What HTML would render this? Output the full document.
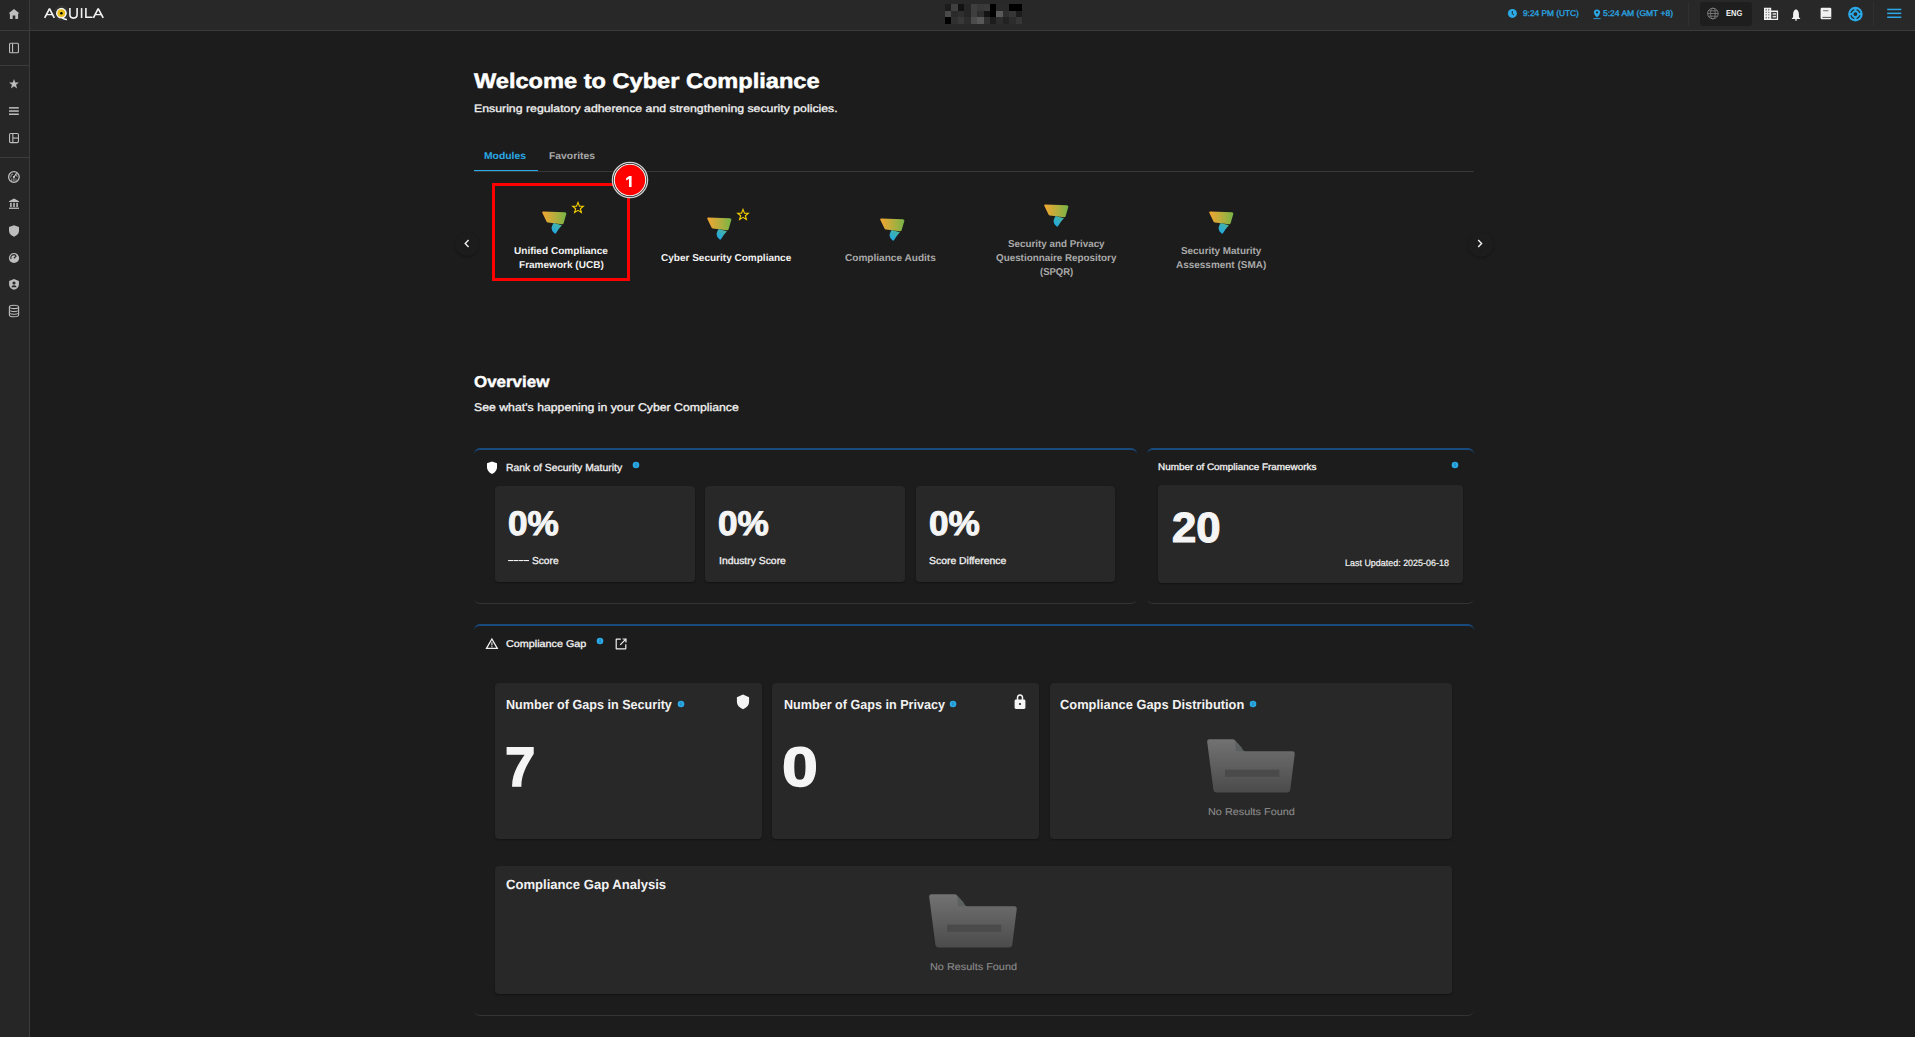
<!DOCTYPE html>
<html><head><meta charset="utf-8"><style>
html,body{margin:0;padding:0;width:1915px;height:1037px;overflow:hidden;background:#1c1c1c;font-family:"Liberation Sans",sans-serif;}
.a{position:absolute;}
.t{position:absolute;white-space:nowrap;transform-origin:0 0;font-family:"Liberation Sans",sans-serif;text-rendering:geometricPrecision;}
#topbar{position:absolute;left:0;top:0;width:1915px;height:30px;background:#282828;border-bottom:1px solid #3b3b3b;}
#side{position:absolute;left:0;top:31px;width:29px;height:1006px;background:#262626;border-right:1px solid #3b3b3b;}
.sep{position:absolute;left:0;width:29px;height:1px;background:#3b3b3b;}
.card{position:absolute;box-sizing:border-box;border-radius:6px;border-top:2px solid #184a7c;border-bottom:1px solid #333;background:#1c1c1c;}
.tile{position:absolute;background:#282828;border-radius:4px;box-shadow:0 1px 2px rgba(0,0,0,0.35);}
.dot{position:absolute;width:6px;height:6px;border-radius:50%;background:#2aa9e6;}

</style></head><body>
<div id="topbar"></div>
<div id="side"></div>
<div class="a" style="left:0;top:0;width:29px;height:30px;background:#262626;border-right:1px solid #3b3b3b"></div>
<div class="sep" style="top:65px"></div>
<div class="sep" style="top:157px"></div>
<!-- sidebar icons -->
<svg class="a" style="left:8px;top:8px" width="12" height="12" viewBox="0 0 12 12"><path d="M6 0.9 L1 5.1 Q0.7 5.4 1.1 5.6 L1.9 5.6 V10.6 Q1.9 11 2.3 11 H4.7 V7.6 H7.3 V11 H9.7 Q10.1 11 10.1 10.6 V5.6 L10.9 5.6 Q11.3 5.4 11 5.1 Z" fill="#bdbdbd"/></svg>
<svg class="a" style="left:8px;top:42px" width="12" height="12" viewBox="0 0 12 12"><rect x="1.55" y="1.25" width="8.9" height="9.5" rx="1" fill="none" stroke="#bdbdbd" stroke-width="1.1"/><rect x="4" y="1.5" width="1.1" height="9" fill="#bdbdbd"/></svg>
<svg class="a" style="left:8px;top:78px" width="12" height="12" viewBox="0 0 12 12"><path d="M6 1 L7.25 4.4 L10.9 4.6 L8.05 6.85 L9.05 10.4 L6 8.35 L2.95 10.4 L3.95 6.85 L1.1 4.6 L4.75 4.4 Z" fill="#bdbdbd"/></svg>
<svg class="a" style="left:8px;top:105px" width="12" height="12" viewBox="0 0 12 12"><rect x="1" y="2.1" width="9.8" height="1.5" fill="#bdbdbd"/><rect x="1" y="5.3" width="9.8" height="1.5" fill="#bdbdbd"/><rect x="1" y="8.5" width="9.8" height="1.5" fill="#bdbdbd"/></svg>
<svg class="a" style="left:8px;top:132px" width="12" height="12" viewBox="0 0 12 12"><rect x="1.55" y="1.45" width="8.9" height="9.2" rx="1.3" fill="none" stroke="#bdbdbd" stroke-width="1.1"/><rect x="4.3" y="1.5" width="1.1" height="9" fill="#bdbdbd"/><rect x="5" y="5.5" width="5" height="1.1" fill="#bdbdbd"/></svg>
<svg class="a" style="left:7px;top:170px" width="14" height="14" viewBox="0 0 14 14"><circle cx="6.9" cy="7" r="5.3" fill="none" stroke="#bdbdbd" stroke-width="1.3"/><path d="M3.7 7.6 A3.3 3.3 0 0 1 6 3.9 M8.2 4.2 A3.3 3.3 0 0 1 10.2 6.8" fill="none" stroke="#a8a8a8" stroke-width="1"/><path d="M6.9 7 L9.6 3.4" stroke="#c8c8c8" stroke-width="1.2"/><circle cx="6.9" cy="7" r="1.1" fill="#d0d0d0"/><path d="M6.9 8 V11.6" stroke="#8a8a8a" stroke-width="1.2"/><path d="M4.8 8.5 V11 M9 8.5 V11" stroke="#9a9a9a" stroke-width="0.9"/></svg>
<svg class="a" style="left:8px;top:197px" width="12" height="13" viewBox="0 0 12 13"><path d="M6 1.5 L11 4.2 V5 H1 V4.2 Z" fill="#bdbdbd"/><rect x="2.1" y="5.8" width="1.6" height="4.2" fill="#bdbdbd"/><rect x="5.2" y="5.8" width="1.6" height="4.2" fill="#bdbdbd"/><rect x="8.3" y="5.8" width="1.6" height="4.2" fill="#bdbdbd"/><rect x="1" y="10.6" width="10" height="1.3" fill="#bdbdbd"/></svg>
<svg class="a" style="left:8px;top:224px" width="12" height="14" viewBox="0 0 12 14"><path d="M6 1.2 L11 3.1 V6.8 Q11 10.6 6 12.7 Q1 10.6 1 6.8 V3.1 Z" fill="#bdbdbd"/></svg>
<svg class="a" style="left:8px;top:252px" width="12" height="12" viewBox="0 0 12 12"><circle cx="6" cy="6" r="5.1" fill="#bdbdbd"/><path d="M3.2 7 A2.9 2.9 0 0 1 8 3.8" fill="none" stroke="#262626" stroke-width="1.1"/><path d="M5.9 6.2 L8.4 3.9" stroke="#262626" stroke-width="1.2"/></svg>
<svg class="a" style="left:8px;top:278px" width="12" height="13" viewBox="0 0 12 13"><path d="M6 0.9 L10.9 2.9 V6.4 Q10.9 10 6 11.8 Q1.1 10 1.1 6.4 V2.9 Z" fill="#bdbdbd"/><circle cx="6" cy="5" r="1.55" fill="#262626"/><path d="M3.4 9.2 Q3.6 7.2 6 7.2 Q8.4 7.2 8.6 9.2 Z" fill="#262626"/></svg>
<svg class="a" style="left:8px;top:304px" width="12" height="14" viewBox="0 0 12 14"><ellipse cx="6" cy="2.9" rx="4.6" ry="1.7" fill="none" stroke="#bdbdbd" stroke-width="1.1"/><path d="M1.4 2.9 V11 Q1.4 12.8 6 12.8 Q10.6 12.8 10.6 11 V2.9" fill="none" stroke="#bdbdbd" stroke-width="1.1"/><path d="M1.4 6 Q1.4 7.6 6 7.6 Q10.6 7.6 10.6 6 M1.4 8.7 Q1.4 10.3 6 10.3 Q10.6 10.3 10.6 8.7" fill="none" stroke="#bdbdbd" stroke-width="1"/></svg>

<!-- logo -->
<svg class="a" style="left:40px;top:4px" width="70" height="20" viewBox="40 4 70 20">
 <path d="M44.7 17.9 L49.5 8.6 L54.3 17.9" fill="none" stroke="#f2f2f2" stroke-width="1.65" stroke-linejoin="bevel"/><path d="M46.8 14.6 H52.2" stroke="#f2f2f2" stroke-width="1.3"/>
 <circle cx="61.4" cy="13.3" r="6.9" fill="none" stroke="#3c3c3c" stroke-width="0.9"/>
 <circle cx="61.4" cy="13.2" r="5.4" fill="#f2f2f2"/>
 <circle cx="61.3" cy="13.1" r="3.9" fill="#e6bf1d"/>
 <circle cx="61.4" cy="13.2" r="1.25" fill="#000"/>
 <path d="M62.3 17.9 Q64.6 19.7 67 19.4" fill="none" stroke="#f2f2f2" stroke-width="1.5"/>
 <path d="M69.9 8.1 V14.6 Q69.9 18.1 73.5 18.1 Q77.1 18.1 77.1 14.6 V8.1" fill="none" stroke="#f2f2f2" stroke-width="1.6"/>
 <rect x="80.8" y="8.1" width="1.6" height="9.9" fill="#f2f2f2"/>
 <path d="M85.9 8.1 V17.2 H92.5" fill="none" stroke="#f2f2f2" stroke-width="1.6"/>
 <path d="M93.4 17.9 L98.2 8.6 L103.2 17.9" fill="none" stroke="#f2f2f2" stroke-width="1.65" stroke-linejoin="bevel"/><path d="M95.5 14.6 H101" stroke="#f2f2f2" stroke-width="1.3"/>
</svg>
<svg class="a" style="left:945px;top:4px" width="77" height="20" viewBox="945 4 77 20" shape-rendering="crispEdges"><rect x="945" y="4" width="6" height="7" fill="#1c1c1c"/><rect x="951" y="4" width="7" height="7" fill="#404040"/><rect x="958" y="4" width="6" height="7" fill="#121212"/><rect x="964" y="4" width="7" height="7" fill="#262626"/><rect x="971" y="4" width="6" height="7" fill="#3e3e3e"/><rect x="977" y="4" width="7" height="7" fill="#383838"/><rect x="984" y="4" width="6" height="7" fill="#3a3a3a"/><rect x="990" y="4" width="6" height="7" fill="#000000"/><rect x="996" y="4" width="7" height="7" fill="#292929"/><rect x="1003" y="4" width="6" height="7" fill="#292929"/><rect x="1009" y="4" width="7" height="7" fill="#000000"/><rect x="1016" y="4" width="6" height="7" fill="#000000"/><rect x="945" y="11" width="6" height="6" fill="#4a4a4a"/><rect x="951" y="11" width="7" height="6" fill="#2a2a2a"/><rect x="958" y="11" width="6" height="6" fill="#2e2e2e"/><rect x="964" y="11" width="7" height="6" fill="#262626"/><rect x="971" y="11" width="6" height="6" fill="#3e3e3e"/><rect x="977" y="11" width="7" height="6" fill="#2e2e2e"/><rect x="984" y="11" width="6" height="6" fill="#131313"/><rect x="990" y="11" width="6" height="6" fill="#000000"/><rect x="996" y="11" width="7" height="6" fill="#5a5a5a"/><rect x="1003" y="11" width="6" height="6" fill="#2e2e2e"/><rect x="1009" y="11" width="7" height="6" fill="#363636"/><rect x="1016" y="11" width="6" height="6" fill="#1c1c1c"/><rect x="945" y="17" width="6" height="7" fill="#000000"/><rect x="951" y="17" width="7" height="7" fill="#303030"/><rect x="958" y="17" width="6" height="7" fill="#383838"/><rect x="964" y="17" width="7" height="7" fill="#2c2c2c"/><rect x="971" y="17" width="6" height="7" fill="#4c4c4c"/><rect x="977" y="17" width="7" height="7" fill="#585858"/><rect x="984" y="17" width="6" height="7" fill="#303030"/><rect x="990" y="17" width="6" height="7" fill="#1c1c1c"/><rect x="996" y="17" width="7" height="7" fill="#2c2c2c"/><rect x="1003" y="17" width="6" height="7" fill="#222222"/><rect x="1009" y="17" width="7" height="7" fill="#2c2c2c"/><rect x="1016" y="17" width="6" height="7" fill="#363636"/></svg>
<!-- top right -->
<svg class="a" style="left:1507px;top:8px" width="11" height="11" viewBox="0 0 11 11"><circle cx="5.4" cy="5.4" r="4.5" fill="#2aa9e6"/><path d="M5.3 3 V5.8 L7 7" fill="none" stroke="#272727" stroke-width="1"/></svg>
<svg class="a" style="left:1592px;top:8px" width="10" height="12" viewBox="0 0 10 12"><path d="M5 1.4 Q8.1 1.4 8.1 4.4 Q8.1 6.6 5 9.6 Q1.9 6.6 1.9 4.4 Q1.9 1.4 5 1.4 Z" fill="#2aa9e6"/><circle cx="5" cy="4.4" r="1.1" fill="#272727"/><rect x="1.4" y="10.2" width="7.2" height="0.9" fill="#2aa9e6"/></svg>
<div class="a" style="left:1688px;top:2px;width:1px;height:24px;background:#303030"></div>
<div class="a" style="left:1699.5px;top:2px;width:52px;height:23.5px;background:#1e1e1e;border-radius:3px"></div>
<svg class="a" style="left:1706px;top:7px" width="14" height="14" viewBox="0 0 14 14"><circle cx="6.9" cy="6.5" r="5.3" fill="none" stroke="#7a7a7a" stroke-width="1"/><ellipse cx="6.9" cy="6.5" rx="2.3" ry="5.3" fill="none" stroke="#7a7a7a" stroke-width="0.9"/><path d="M1.6 6.5 H12.2 M2.4 3.8 H11.4 M2.4 9.2 H11.4" stroke="#7a7a7a" stroke-width="0.9"/></svg>
<svg class="a" style="left:1763px;top:7px" width="17" height="15" viewBox="0 0 17 15"><path d="M1 0.7 H8.2 V3.6 H15.1 V13.1 H1 Z" fill="#f2f2f2"/><g fill="#7a7a7a"><rect x="2.6" y="1.9" width="1.3" height="1.6"/><rect x="5.1" y="1.9" width="1.3" height="1.6"/><rect x="2.6" y="4.8" width="1.3" height="1.2"/><rect x="5.1" y="4.8" width="1.3" height="1.2"/><rect x="2.6" y="7.2" width="1.3" height="1.2"/><rect x="5.1" y="7.2" width="1.3" height="1.2"/><rect x="2.6" y="9.9" width="1.3" height="1.6"/><rect x="5.1" y="9.9" width="1.3" height="1.6"/></g><rect x="8.2" y="5" width="5.6" height="6.8" fill="#3a3a3a"/><rect x="9.6" y="6.2" width="3.4" height="1.5" fill="#dcdcdc"/><rect x="9.6" y="8.9" width="3.4" height="1.5" fill="#dcdcdc"/></svg>
<svg class="a" style="left:1790px;top:8px" width="12" height="14" viewBox="0 0 12 14"><path d="M6 1.2 Q8.8 2.4 8.9 6.2 V9 L10.4 10.9 H1.6 L3.1 9 V6.2 Q3.2 2.4 6 1.2 Z" fill="#f2f2f2"/><rect x="4.9" y="11.3" width="2.2" height="1.3" rx="0.6" fill="#f2f2f2"/></svg>
<svg class="a" style="left:1819px;top:6px" width="14" height="15" viewBox="0 0 14 15"><rect x="1.6" y="1.7" width="10.7" height="11.5" rx="1.3" fill="#f2f2f2"/><rect x="4.1" y="4.3" width="5.3" height="0.9" fill="#5a5a5a"/><rect x="3.4" y="10.9" width="8.9" height="0.8" fill="#272727"/></svg>
<svg class="a" style="left:1847px;top:6px" width="17" height="17" viewBox="-8.4 -8.1 17 17"><circle r="7.3" fill="#2aa9e6"/><circle r="1.9" fill="#282828"/><path d="M4.29 1.65 A4.6 4.6 0 0 1 1.65 4.29 M-1.65 4.29 A4.6 4.6 0 0 1 -4.29 1.65 M-4.29 -1.65 A4.6 4.6 0 0 1 -1.65 -4.29 M1.65 -4.29 A4.6 4.6 0 0 1 4.29 -1.65" fill="none" stroke="#282828" stroke-width="1.3" stroke-linecap="round"/></svg>
<div class="a" style="left:1873px;top:2px;width:1px;height:24px;background:#303030"></div>
<svg class="a" style="left:1886px;top:7px" width="16" height="13" viewBox="0 0 16 13"><rect x="1.2" y="1.7" width="14.1" height="1.5" fill="#2aa9e6"/><rect x="1.2" y="5.6" width="14.1" height="1.5" fill="#2aa9e6"/><rect x="1.2" y="9.5" width="14.1" height="1.5" fill="#2aa9e6"/></svg>
<svg width="0" height="0" style="position:absolute"><defs>
<linearGradient id="gTop" x1="0" y1="0" x2="1" y2="0"><stop offset="0" stop-color="#f2a531"/><stop offset="0.5" stop-color="#b9ad3c"/><stop offset="1" stop-color="#76b546"/></linearGradient>
<linearGradient id="gBot" x1="0.2" y1="1" x2="0.8" y2="0"><stop offset="0" stop-color="#1ea7e8"/><stop offset="1" stop-color="#4cb59a"/></linearGradient>
<linearGradient id="gFold" x1="0" y1="0" x2="0" y2="1"><stop offset="0" stop-color="#727272"/><stop offset="1" stop-color="#4b4b4b"/></linearGradient>
</defs></svg>

<!-- tabs -->
<div class="a" style="left:474px;top:171px;width:1000px;height:1px;background:#383838"></div>
<div class="a" style="left:474px;top:169.6px;width:64px;height:1.6px;background:#2aa9e6"></div>
<!-- arrows -->
<div class="a" style="left:455px;top:231.5px;width:24px;height:24px;border-radius:50%;background:#1c1c1c;box-shadow:0 1px 2px rgba(0,0,0,0.3)"></div>
<svg class="a" style="left:461px;top:237px" width="12" height="13" viewBox="0 0 12 13"><path d="M7.6 3 L4.2 6.5 L7.6 10" fill="none" stroke="#f0f0f0" stroke-width="1.4"/></svg>
<div class="a" style="left:1467.5px;top:231.5px;width:26px;height:25px;border-radius:50%;background:#1c1c1c;box-shadow:0 1px 2px rgba(0,0,0,0.3)"></div>
<svg class="a" style="left:1474px;top:237px" width="12" height="13" viewBox="0 0 12 13"><path d="M4.2 3 L7.6 6.5 L4.2 10" fill="none" stroke="#f0f0f0" stroke-width="1.4"/></svg>

<svg class="a" style="left:541.5px;top:209.8px" width="25" height="25" viewBox="0 0 25 25"><path d="M1.3 1.4 L22.9 2.2 Q24.6 2.4 24.3 4.1 L21.6 13.2 Q21.2 14.4 19.8 14.2 L6 12.6 Q4.9 12.5 4.5 11.5 L0.3 2.8 Q-0.1 1.4 1.3 1.4 Z" fill="url(#gTop)"/><path d="M11.7 13 L19.9 15.3 Q16.3 19.2 14.1 23 Q13.3 24.3 12.4 23.3 Q9.4 20.4 9.5 18 Q9.7 15.4 11.7 13 Z" fill="url(#gBot)"/></svg>
<svg class="a" style="left:570.9px;top:200.8px" width="14" height="14" viewBox="-7 -7 14 14"><path d="M0 -5.6 L1.45 -1.9 L5.3 -1.7 L2.35 0.75 L3.35 4.5 L0 2.35 L-3.35 4.5 L-2.35 0.75 L-5.3 -1.7 L-1.45 -1.9 Z" fill="none" stroke="#f1cb00" stroke-width="1.15" stroke-linejoin="miter"/></svg>
<svg class="a" style="left:706.8px;top:216.3px" width="25" height="25" viewBox="0 0 25 25"><path d="M1.3 1.4 L22.9 2.2 Q24.6 2.4 24.3 4.1 L21.6 13.2 Q21.2 14.4 19.8 14.2 L6 12.6 Q4.9 12.5 4.5 11.5 L0.3 2.8 Q-0.1 1.4 1.3 1.4 Z" fill="url(#gTop)"/><path d="M11.7 13 L19.9 15.3 Q16.3 19.2 14.1 23 Q13.3 24.3 12.4 23.3 Q9.4 20.4 9.5 18 Q9.7 15.4 11.7 13 Z" fill="url(#gBot)"/></svg>
<svg class="a" style="left:735.8px;top:208.0px" width="14" height="14" viewBox="-7 -7 14 14"><path d="M0 -5.6 L1.45 -1.9 L5.3 -1.7 L2.35 0.75 L3.35 4.5 L0 2.35 L-3.35 4.5 L-2.35 0.75 L-5.3 -1.7 L-1.45 -1.9 Z" fill="none" stroke="#f1cb00" stroke-width="1.15" stroke-linejoin="miter"/></svg>
<svg class="a" style="left:879.6px;top:216.6px" width="25" height="25" viewBox="0 0 25 25"><path d="M1.3 1.4 L22.9 2.2 Q24.6 2.4 24.3 4.1 L21.6 13.2 Q21.2 14.4 19.8 14.2 L6 12.6 Q4.9 12.5 4.5 11.5 L0.3 2.8 Q-0.1 1.4 1.3 1.4 Z" fill="url(#gTop)"/><path d="M11.7 13 L19.9 15.3 Q16.3 19.2 14.1 23 Q13.3 24.3 12.4 23.3 Q9.4 20.4 9.5 18 Q9.7 15.4 11.7 13 Z" fill="url(#gBot)"/></svg>
<svg class="a" style="left:1043.7px;top:202.7px" width="25" height="25" viewBox="0 0 25 25"><path d="M1.3 1.4 L22.9 2.2 Q24.6 2.4 24.3 4.1 L21.6 13.2 Q21.2 14.4 19.8 14.2 L6 12.6 Q4.9 12.5 4.5 11.5 L0.3 2.8 Q-0.1 1.4 1.3 1.4 Z" fill="url(#gTop)"/><path d="M11.7 13 L19.9 15.3 Q16.3 19.2 14.1 23 Q13.3 24.3 12.4 23.3 Q9.4 20.4 9.5 18 Q9.7 15.4 11.7 13 Z" fill="url(#gBot)"/></svg>
<svg class="a" style="left:1208.6px;top:209.8px" width="25" height="25" viewBox="0 0 25 25"><path d="M1.3 1.4 L22.9 2.2 Q24.6 2.4 24.3 4.1 L21.6 13.2 Q21.2 14.4 19.8 14.2 L6 12.6 Q4.9 12.5 4.5 11.5 L0.3 2.8 Q-0.1 1.4 1.3 1.4 Z" fill="url(#gTop)"/><path d="M11.7 13 L19.9 15.3 Q16.3 19.2 14.1 23 Q13.3 24.3 12.4 23.3 Q9.4 20.4 9.5 18 Q9.7 15.4 11.7 13 Z" fill="url(#gBot)"/></svg>

<!-- red box -->
<div class="a" style="left:491.5px;top:182.5px;width:138.5px;height:98.5px;box-sizing:border-box;border:3px solid #ff0000"></div>
<!-- badge -->
<svg class="a" style="left:610px;top:160px" width="40" height="40" viewBox="-20 -20 40 40"><circle r="17.6" fill="#1c1c1c" stroke="#cfcfcf" stroke-width="1.3"/><circle r="15.7" fill="#ff0000" stroke="#f2f2f2" stroke-width="1.1"/><path d="M-0.7 -3.9 L1.6 -3.9 L1.6 6.9 L-1 6.9 L-1 -0.9 L-3.9 0.6 L-3.9 -1.7 Z" fill="#ffffff"/></svg>
<!-- cards -->
<div class="card" style="left:474px;top:448px;width:663px;height:156px"></div>
<div class="card" style="left:1147px;top:448px;width:327px;height:156px"></div>
<div class="tile" style="left:495px;top:486px;width:200px;height:96px"></div>
<div class="tile" style="left:705px;top:486px;width:200px;height:96px"></div>
<div class="tile" style="left:916px;top:486px;width:199px;height:96px"></div>
<div class="tile" style="left:1158px;top:485px;width:305px;height:97.5px"></div>
<svg class="a" style="left:486px;top:460px" width="12" height="15" viewBox="0 0 12 15"><path d="M6 1.4 L11 3.3 V7.2 Q11 11.6 6 13.9 Q1 11.6 1 7.2 V3.3 Z" fill="#ffffff"/></svg>
<div class="card" style="left:474px;top:624px;width:1000px;height:392px"></div>
<div class="tile" style="left:495px;top:683px;width:267px;height:155.5px"></div>
<div class="tile" style="left:772px;top:683px;width:267px;height:155.5px"></div>
<div class="tile" style="left:1050px;top:683px;width:402px;height:155.5px"></div>
<div class="tile" style="left:495px;top:866px;width:957px;height:127.5px"></div>
<svg class="a" style="left:484px;top:636px" width="16" height="15" viewBox="0 0 16 15"><path d="M7.9 3 L13.3 12.4 H2.5 Z" fill="none" stroke="#f0f0f0" stroke-width="1.3" stroke-linejoin="miter"/><rect x="7.35" y="6.3" width="1.1" height="3.2" fill="#f0f0f0"/><rect x="7.35" y="10.2" width="1.1" height="1.1" fill="#f0f0f0"/></svg>
<svg class="a" style="left:614px;top:637px" width="14" height="14" viewBox="0 0 14 14"><path d="M6.8 2.1 H2.4 Q2.2 2.1 2.2 2.4 V11.5 Q2.2 11.8 2.5 11.8 H11.5 Q11.8 11.8 11.8 11.5 V7.2" fill="none" stroke="#f0f0f0" stroke-width="1.2"/><path d="M6.2 7.8 L11.6 2.4 M8.6 2 H12 V5.4" fill="none" stroke="#f0f0f0" stroke-width="1.2"/></svg>
<svg class="a" style="left:735px;top:693px" width="16" height="18" viewBox="0 0 16 18"><path d="M8 1.6 L14.1 4.3 V8.8 Q14.1 13.9 8 16.2 Q1.9 13.9 1.9 8.8 V4.3 Z" fill="#f5f5f5"/></svg>
<svg class="a" style="left:1012px;top:693px" width="16" height="18" viewBox="0 0 16 18"><path d="M5.5 7 V4.8 Q5.5 1.9 8 1.9 Q10.5 1.9 10.5 4.8 V7" fill="none" stroke="#f5f5f5" stroke-width="1.5"/><rect x="2.6" y="6.6" width="10.8" height="9.4" rx="1.4" fill="#f5f5f5"/><circle cx="8" cy="11" r="1.1" fill="#222"/></svg>

<svg class="a" style="left:1207.0px;top:739.4px" width="90" height="56" viewBox="0 0 90 56"><path d="M0.2 3 Q0 0.2 2.8 0.2 L25.5 0.2 Q27 0.2 28.2 1.4 L34.5 8.6 Q35.6 12.3 38.5 12.3 L85.5 12.3 Q88 12.3 87.7 15.2 L83.3 50.5 Q82.9 53.5 79.8 53.5 L9.8 53.5 Q6.8 53.5 6.4 50.5 Z" fill="url(#gFold)"/><path d="M28 1.2 L35 9 Q36 12.3 38.5 12.3 L29 12.3 Z" fill="#4e5757" opacity="0.55"/><rect x="18" y="30.7" width="54.3" height="7.1" fill="#4a4a4a"/></svg>
<svg class="a" style="left:929.0px;top:894.3px" width="90" height="56" viewBox="0 0 90 56"><path d="M0.2 3 Q0 0.2 2.8 0.2 L25.5 0.2 Q27 0.2 28.2 1.4 L34.5 8.6 Q35.6 12.3 38.5 12.3 L85.5 12.3 Q88 12.3 87.7 15.2 L83.3 50.5 Q82.9 53.5 79.8 53.5 L9.8 53.5 Q6.8 53.5 6.4 50.5 Z" fill="url(#gFold)"/><path d="M28 1.2 L35 9 Q36 12.3 38.5 12.3 L29 12.3 Z" fill="#4e5757" opacity="0.55"/><rect x="18" y="30.7" width="54.3" height="7.1" fill="#4a4a4a"/></svg>
<svg class="a" style="left:632.0px;top:460.6px" width="8" height="8" viewBox="-4 -4 8 8"><circle r="3.3" fill="#2aa9e6"/><rect x="-0.45" y="-0.6" width="0.9" height="2.2" fill="#1f6f99"/><rect x="-0.45" y="-2" width="0.9" height="0.8" fill="#1f6f99"/></svg>
<svg class="a" style="left:1451.2px;top:461.2px" width="8" height="8" viewBox="-4 -4 8 8"><circle r="3.3" fill="#2aa9e6"/><rect x="-0.45" y="-0.6" width="0.9" height="2.2" fill="#1f6f99"/><rect x="-0.45" y="-2" width="0.9" height="0.8" fill="#1f6f99"/></svg>
<svg class="a" style="left:595.9px;top:636.9px" width="8" height="8" viewBox="-4 -4 8 8"><circle r="3.3" fill="#2aa9e6"/><rect x="-0.45" y="-0.6" width="0.9" height="2.2" fill="#1f6f99"/><rect x="-0.45" y="-2" width="0.9" height="0.8" fill="#1f6f99"/></svg>
<svg class="a" style="left:677.0px;top:700.2px" width="8" height="8" viewBox="-4 -4 8 8"><circle r="3.3" fill="#2aa9e6"/><rect x="-0.45" y="-0.6" width="0.9" height="2.2" fill="#1f6f99"/><rect x="-0.45" y="-2" width="0.9" height="0.8" fill="#1f6f99"/></svg>
<svg class="a" style="left:948.9px;top:700.2px" width="8" height="8" viewBox="-4 -4 8 8"><circle r="3.3" fill="#2aa9e6"/><rect x="-0.45" y="-0.6" width="0.9" height="2.2" fill="#1f6f99"/><rect x="-0.45" y="-2" width="0.9" height="0.8" fill="#1f6f99"/></svg>
<svg class="a" style="left:1249.0px;top:700.1px" width="8" height="8" viewBox="-4 -4 8 8"><circle r="3.3" fill="#2aa9e6"/><rect x="-0.45" y="-0.6" width="0.9" height="2.2" fill="#1f6f99"/><rect x="-0.45" y="-2" width="0.9" height="0.8" fill="#1f6f99"/></svg>
<svg class="a" style="left:508px;top:559px" width="22" height="3" viewBox="0 0 22 3"><rect x="0.1" y="1" width="4.9" height="1.1" fill="#f2f2f2"/><rect x="5.4" y="1" width="4.9" height="1.1" fill="#f2f2f2"/><rect x="10.7" y="1" width="4.9" height="1.1" fill="#f2f2f2"/><rect x="16" y="1" width="5" height="1.1" fill="#f2f2f2"/></svg>

<div class="t" style="left:1523.30px;top:9.15px;font-size:8.29px;line-height:8.29px;font-weight:400;color:#2aa9e6;transform:scaleX(1.0032);-webkit-text-stroke:0.3px #2aa9e6;">9:24 PM (UTC)</div>
<div class="t" style="left:1602.70px;top:9.15px;font-size:8.29px;line-height:8.29px;font-weight:400;color:#2aa9e6;transform:scaleX(1.0269);-webkit-text-stroke:0.3px #2aa9e6;">5:24 AM (GMT +8)</div>
<div class="t" style="left:1725.80px;top:8.62px;font-size:8.57px;line-height:8.57px;font-weight:700;color:#f0f0f0;transform:scaleX(0.8733);">ENG</div>
<div class="t" style="left:474.40px;top:70.95px;font-size:21.0px;line-height:21.0px;font-weight:700;color:#ffffff;transform:scaleX(1.1231);-webkit-text-stroke:0.5px #ffffff;">Welcome to Cyber Compliance</div>
<div class="t" style="left:474.00px;top:103.92px;font-size:10.57px;line-height:10.57px;font-weight:400;color:#f2f2f2;transform:scaleX(1.1643);-webkit-text-stroke:0.3px #f2f2f2;">Ensuring regulatory adherence and strengthening security policies.</div>
<div class="t" style="left:483.90px;top:152.10px;font-size:10.0px;line-height:10.0px;font-weight:700;color:#2aa9e6;transform:scaleX(1.0343);">Modules</div>
<div class="t" style="left:548.50px;top:152.10px;font-size:10.0px;line-height:10.0px;font-weight:700;color:#a8a8a8;transform:scaleX(1.0356);">Favorites</div>
<div class="t" style="left:514.30px;top:247.10px;font-size:10.0px;line-height:10.0px;font-weight:700;color:#f2f2f2;transform:scaleX(1.0066);">Unified Compliance</div>
<div class="t" style="left:518.90px;top:261.00px;font-size:10.0px;line-height:10.0px;font-weight:700;color:#f2f2f2;transform:scaleX(1.0032);">Framework (UCB)</div>
<div class="t" style="left:660.90px;top:253.90px;font-size:10.0px;line-height:10.0px;font-weight:700;color:#f2f2f2;transform:scaleX(1.0017);">Cyber Security Compliance</div>
<div class="t" style="left:845.40px;top:254.10px;font-size:10.0px;line-height:10.0px;font-weight:700;color:#a9a9a9;transform:scaleX(1.0065);">Compliance Audits</div>
<div class="t" style="left:1007.50px;top:240.30px;font-size:10.0px;line-height:10.0px;font-weight:700;color:#a9a9a9;transform:scaleX(0.9816);">Security and Privacy</div>
<div class="t" style="left:995.60px;top:254.10px;font-size:10.0px;line-height:10.0px;font-weight:700;color:#a9a9a9;transform:scaleX(0.9846);">Questionnaire Repository</div>
<div class="t" style="left:1039.70px;top:267.90px;font-size:10.0px;line-height:10.0px;font-weight:700;color:#a9a9a9;transform:scaleX(0.9489);">(SPQR)</div>
<div class="t" style="left:1180.50px;top:247.10px;font-size:10.0px;line-height:10.0px;font-weight:700;color:#a9a9a9;transform:scaleX(0.9905);">Security Maturity</div>
<div class="t" style="left:1176.00px;top:261.00px;font-size:10.0px;line-height:10.0px;font-weight:700;color:#a9a9a9;transform:scaleX(0.9961);">Assessment (SMA)</div>
<div class="t" style="left:473.80px;top:375.45px;font-size:15.71px;line-height:15.71px;font-weight:700;color:#ffffff;transform:scaleX(1.0790);-webkit-text-stroke:0.4px #ffffff;">Overview</div>
<div class="t" style="left:473.60px;top:402.53px;font-size:11.14px;line-height:11.14px;font-weight:400;color:#f2f2f2;transform:scaleX(1.1017);-webkit-text-stroke:0.3px #f2f2f2;">See what’s happening in your Cyber Compliance</div>
<div class="t" style="left:505.50px;top:463.55px;font-size:10.29px;line-height:10.29px;font-weight:400;color:#f2f2f2;transform:scaleX(1.0112);-webkit-text-stroke:0.3px #f2f2f2;">Rank of Security Maturity</div>
<div class="t" style="left:508.17px;top:507.28px;font-size:34.14px;line-height:34.14px;font-weight:700;color:#f5f5f5;transform:scaleX(1.0317);-webkit-text-stroke:1px #f5f5f5;">0%</div>
<div class="t" style="left:718.37px;top:507.28px;font-size:34.14px;line-height:34.14px;font-weight:700;color:#f5f5f5;transform:scaleX(1.0317);-webkit-text-stroke:1px #f5f5f5;">0%</div>
<div class="t" style="left:928.77px;top:507.28px;font-size:34.14px;line-height:34.14px;font-weight:700;color:#f5f5f5;transform:scaleX(1.0317);-webkit-text-stroke:1px #f5f5f5;">0%</div>
<div class="t" style="left:531.80px;top:556.50px;font-size:10.0px;line-height:10.0px;font-weight:400;color:#f2f2f2;transform:scaleX(1.0165);-webkit-text-stroke:0.3px #f2f2f2;">Score</div>
<div class="t" style="left:718.90px;top:557.00px;font-size:10.0px;line-height:10.0px;font-weight:400;color:#f2f2f2;transform:scaleX(1.0368);-webkit-text-stroke:0.3px #f2f2f2;">Industry Score</div>
<div class="t" style="left:929.00px;top:557.00px;font-size:10.0px;line-height:10.0px;font-weight:400;color:#f2f2f2;transform:scaleX(1.0410);-webkit-text-stroke:0.3px #f2f2f2;">Score Difference</div>
<div class="t" style="left:1158.20px;top:462.18px;font-size:9.43px;line-height:9.43px;font-weight:400;color:#f2f2f2;transform:scaleX(1.0504);-webkit-text-stroke:0.3px #f2f2f2;">Number of Compliance Frameworks</div>
<div class="t" style="left:1171.77px;top:506.65px;font-size:42.29px;line-height:42.29px;font-weight:700;color:#f5f5f5;transform:scaleX(1.0334);-webkit-text-stroke:1.2px #f5f5f5;">20</div>
<div class="t" style="left:1345.40px;top:559.33px;font-size:9.14px;line-height:9.14px;font-weight:400;color:#f2f2f2;transform:scaleX(0.9797);-webkit-text-stroke:0.3px #f2f2f2;-webkit-text-stroke:0.2px #f2f2f2;">Last Updated: 2025-06-18</div>
<div class="t" style="left:505.90px;top:639.52px;font-size:9.86px;line-height:9.86px;font-weight:400;color:#f2f2f2;transform:scaleX(1.0956);-webkit-text-stroke:0.3px #f2f2f2;">Compliance Gap</div>
<div class="t" style="left:506.30px;top:697.63px;font-size:13.14px;line-height:13.14px;font-weight:700;color:#f2f2f2;transform:scaleX(0.9594);">Number of Gaps in Security</div>
<div class="t" style="left:783.60px;top:697.63px;font-size:13.14px;line-height:13.14px;font-weight:700;color:#f2f2f2;transform:scaleX(0.9599);">Number of Gaps in Privacy</div>
<div class="t" style="left:1060.20px;top:697.73px;font-size:13.14px;line-height:13.14px;font-weight:700;color:#f2f2f2;transform:scaleX(0.9796);">Compliance Gaps Distribution</div>
<div class="t" style="left:504.94px;top:740.05px;font-size:55.71px;line-height:55.71px;font-weight:700;color:#f5f5f5;transform:scaleX(0.9815);-webkit-text-stroke:1.4px #f5f5f5;">7</div>
<div class="t" style="left:782.48px;top:740.05px;font-size:55.71px;line-height:55.71px;font-weight:700;color:#f5f5f5;transform:scaleX(1.1593);-webkit-text-stroke:1.4px #f5f5f5;">0</div>
<div class="t" style="left:1207.70px;top:808.00px;font-size:10.0px;line-height:10.0px;font-weight:400;color:#8c8c8c;transform:scaleX(1.0846);-webkit-text-stroke:0.3px #8c8c8c;-webkit-text-stroke:0.1px #8c8c8c;">No Results Found</div>
<div class="t" style="left:505.90px;top:878.38px;font-size:13.43px;line-height:13.43px;font-weight:700;color:#f2f2f2;transform:scaleX(0.9740);">Compliance Gap Analysis</div>
<div class="t" style="left:930.20px;top:962.80px;font-size:10.0px;line-height:10.0px;font-weight:400;color:#8c8c8c;transform:scaleX(1.0871);-webkit-text-stroke:0.3px #8c8c8c;-webkit-text-stroke:0.1px #8c8c8c;">No Results Found</div>
</body></html>
